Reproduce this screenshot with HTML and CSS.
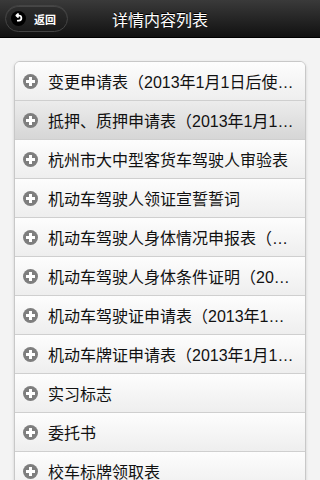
FILE: index.html
```html
<!DOCTYPE html>
<html>
<head>
<meta charset="utf-8">
<link rel="stylesheet" href="styles.css">
</head>
<body>
<div class="header">
  <div class="back">
    <span class="back-icon"><svg width="15" height="15" viewBox="0 0 14 14"><circle cx="7" cy="7" r="7" fill="#000"/><path d="M5 4.2 H7.3 A2.4 2.4 0 0 1 7.3 9 H6.3 M5 4.2 L6.6 2.8 M5 4.2 L6.6 5.6" fill="none" stroke="#fff" stroke-width="1.6" stroke-linecap="round" stroke-linejoin="round"/></svg></span>
    <span class="back-text">返回</span>
  </div>
  <div class="title">详情内容列表</div>
</div>
<div class="content">
  <ul class="list">
    <li class="item"><span class="plus"></span><span class="label">变更申请表（2013年1月1日后使…</span></li>
    <li class="item active"><span class="plus"></span><span class="label">抵押、质押申请表（2013年1月1…</span></li>
    <li class="item"><span class="plus"></span><span class="label">杭州市大中型客货车驾驶人审验表</span></li>
    <li class="item"><span class="plus"></span><span class="label">机动车驾驶人领证宣誓誓词</span></li>
    <li class="item"><span class="plus"></span><span class="label">机动车驾驶人身体情况申报表（…</span></li>
    <li class="item"><span class="plus"></span><span class="label">机动车驾驶人身体条件证明（20…</span></li>
    <li class="item"><span class="plus"></span><span class="label">机动车驾驶证申请表（2013年1…</span></li>
    <li class="item"><span class="plus"></span><span class="label">机动车牌证申请表（2013年1月1…</span></li>
    <li class="item"><span class="plus"></span><span class="label">实习标志</span></li>
    <li class="item"><span class="plus"></span><span class="label">委托书</span></li>
    <li class="item"><span class="plus"></span><span class="label">校车标牌领取表</span></li>
  </ul>
</div>
</body>
</html>
```
FILE: styles.css
```css
html, body {
  margin: 0;
  padding: 0;
  height: 480px;
  overflow: hidden;
}
body {
  background: #f3f3f3;
  font-family: "Liberation Sans", "Noto Sans CJK SC", sans-serif;
}
.header {
  height: 37px;
  background: linear-gradient(#3a3a3a, #111);
  border-bottom: 1px solid #000;
  position: relative;
  display: flex;
  align-items: center;
  justify-content: center;
}
.back {
  position: absolute;
  left: 5px;
  top: 5px;
  height: 27px;
  width: 63px;
  box-sizing: border-box;
  border: 1px solid #444;
  border-radius: 14px;
  background: linear-gradient(#2e2e2e, #1a1a1a);
  box-shadow: inset 0 1px 0 rgba(255,255,255,0.12);
  display: flex;
  align-items: center;
  padding-left: 5px;
}
.back-icon {
  display: flex;
  width: 15px;
  height: 15px;
}
.back-text {
  color: #fff;
  font-size: 11px;
  font-weight: bold;
  margin-left: 8px;
}
.title {
  color: #fff;
  font-size: 16px;
  text-shadow: 0 -1px 0 #000;
}
.content {
  padding: 23px 14px 0 14px;
}
.list {
  list-style: none;
  margin: 0;
  padding: 0;
  border: 1px solid #c8c8c8;
  border-radius: 6px;
  overflow: hidden;
  box-shadow: 0 1px 3px rgba(0,0,0,0.15);
  width: 292px;
  box-sizing: border-box;
}
.item {
  height: 38px;
  display: flex;
  align-items: center;
  background: linear-gradient(#fdfdfd, #eeeeee);
  border-top: 1px solid #cfcfcf;
  padding-left: 8px;
  padding-right: 8px;
}
.item:first-child {
  border-top: none;
}
.item.active {
  background: linear-gradient(#ececec, #d6d6d6);
}
.plus {
  flex: none;
  width: 15px;
  height: 15px;
  border-radius: 50%;
  background:
    linear-gradient(#fff, #fff) center / 9px 3px no-repeat,
    linear-gradient(#fff, #fff) center / 3px 9px no-repeat,
    #7e7e7e;
}
.label {
  margin-left: 10px;
  font-size: 16px;
  color: #111;
  white-space: nowrap;
}
```
